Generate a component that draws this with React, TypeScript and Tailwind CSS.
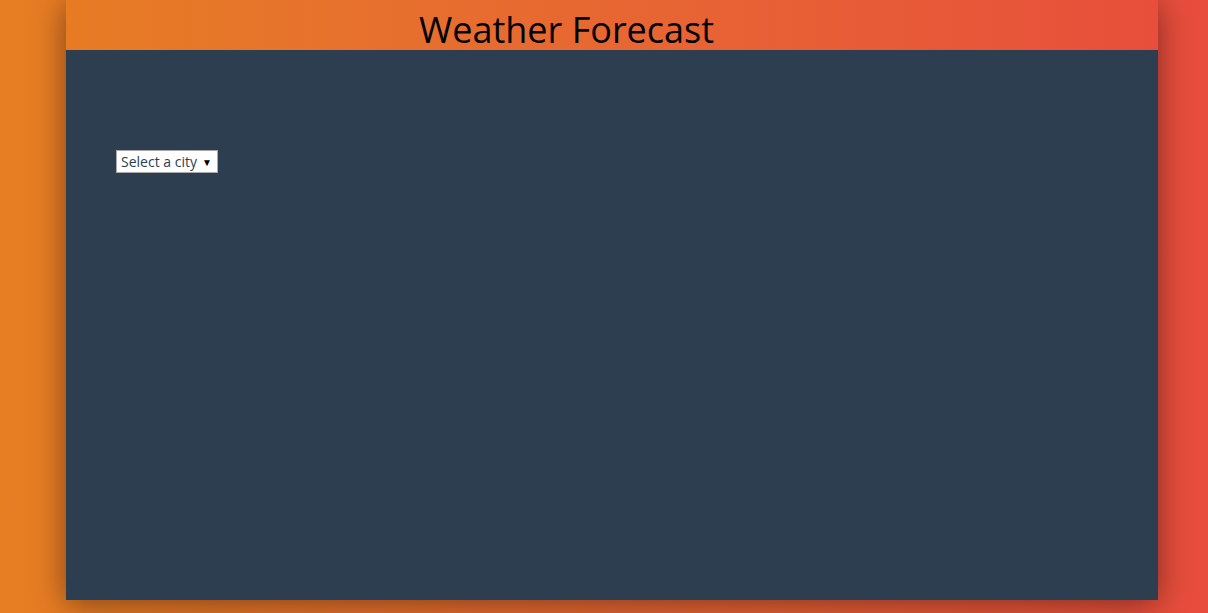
export default function App() {
  return (
    <div
      className="w-[1208px] h-[613px] overflow-hidden bg-gradient-to-r from-[#e67e22] to-[#e74c3c]"
      style={{ fontFamily: '"Open Sans", sans-serif' }}
    >
      <div className="ml-[66px] w-[1092px] h-[600px] flex flex-col shadow-[0_4px_30px_rgba(0,0,0,0.45)]">
        <header className="h-[50px] shrink-0 pl-[353px]">
          <h1 className="text-[36px] leading-[49px] pt-[5px] text-black font-normal whitespace-nowrap">
            Weather Forecast
          </h1>
        </header>
        <main className="flex-1 bg-[#2c3e50] pt-[100px] pl-[50px]">
          <div className="w-[102px] h-[23px] bg-white border border-[#a9a9a9] flex items-center justify-between pl-[4px] pr-[5px]">
            <span className="text-[14px] leading-none text-[#2c3e50] whitespace-nowrap">Select a city</span>
            <span className="text-[10px] leading-none text-black">▼</span>
          </div>
        </main>
      </div>
    </div>
  );
}
